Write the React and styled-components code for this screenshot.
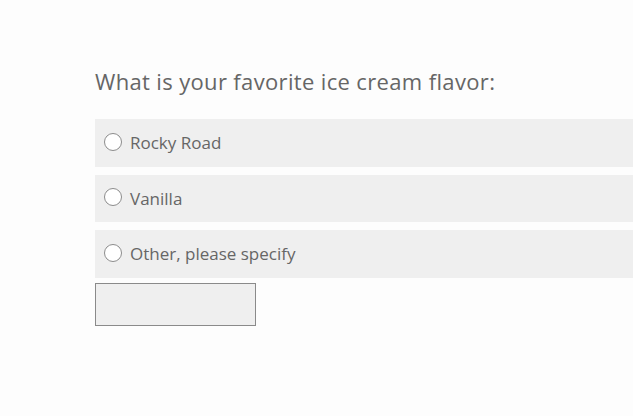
import React, { useState } from 'react'
import styled, { createGlobalStyle } from 'styled-components'

const GlobalStyle = createGlobalStyle`
  html, body {
    margin: 0;
    padding: 0;
    background: #fdfdfd;
    overflow: hidden;
  }
  body {
    font-family: "Open Sans", "DejaVu Sans", sans-serif;
  }
`

const Page = styled.div`
  width: 633px;
  height: 416px;
  padding: 64px 0 0 95px;
  box-sizing: border-box;
  overflow: hidden;
`

const Question = styled.h2`
  margin: 0 0 21px 0;
  font-size: 22px;
  font-weight: 400;
  color: #666;
  letter-spacing: 0.35px;
  line-height: 34px;
`

const Options = styled.div`
  display: flex;
  flex-direction: column;
  gap: 8px;
  width: 560px;
`

const Option = styled.label`
  display: flex;
  align-items: center;
  gap: 8px;
  height: 47.5px;
  padding: 0 0 0 9px;
  background: #efefef;
  cursor: pointer;
  color: #666;
  font-size: 17px;
  letter-spacing: 0;
`

const Radio = styled.span`
  width: 18px;
  height: 18px;
  border-radius: 50%;
  border: 1px solid ${p => (p.$checked ? '#555' : '#8c8c8c')};
  background: ${p => (p.$checked ? 'radial-gradient(#666 40%, #fff 45%)' : '#fff')};
  box-sizing: border-box;
  flex-shrink: 0;
  margin-top: -2px;
`

const OtherInput = styled.input`
  display: block;
  margin-top: 5px;
  width: 161px;
  height: 43px;
  box-sizing: border-box;
  border: 1px solid #8a8a8a;
  background: #efefef;
  outline: none;
`

const flavors = ['Rocky Road', 'Vanilla', 'Other, please specify']

export default function App() {
  const [picked, setPicked] = useState(null)

  return (
    <Page>
      <GlobalStyle />
      <Question>What is your favorite ice cream flavor:</Question>
      <Options>
        {flavors.map(f => (
          <Option key={f} onClick={() => setPicked(f)}>
            <Radio $checked={picked === f} />
            {f}
          </Option>
        ))}
      </Options>
      <OtherInput type="text" />
    </Page>
  )
}
